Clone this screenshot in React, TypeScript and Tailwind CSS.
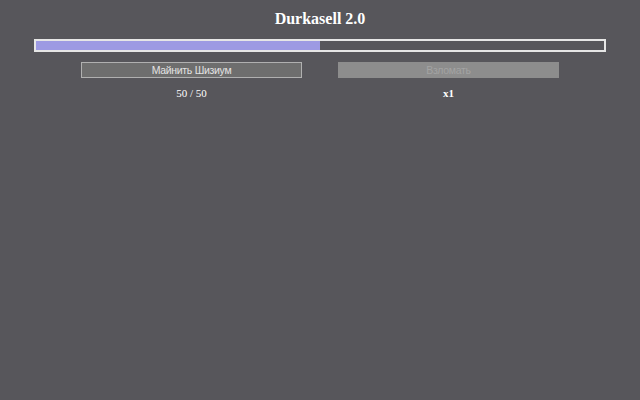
export default function App() {
  const current = 50;
  const max = 50;
  const progress = 50;

  return (
    <div className="min-h-screen bg-[#57565b] font-['Liberation_Serif',serif] text-white">
      <h1 className="pt-[9px] text-center text-[16px] font-bold leading-[20px]">Durkasell 2.0</h1>

      {/* прогресс */}
      <div className="mx-[34px] mt-[10px] h-[13px] border-2 border-[#e6e6e6]">
        <div className="h-full bg-[#9d9ae3]" style={{ width: `${progress}%` }} />
      </div>

      <div className="mx-[63px] mt-[10px] grid grid-cols-2">
        <div className="flex flex-col items-center">
          <button className="h-[16px] w-[221px] border border-[#b0b0b0] bg-[#6e6e6e] font-['Liberation_Sans',sans-serif] text-[10.5px] leading-[14px] tracking-[-0.3px] text-[#e2e2e2]">
            Майнить Шизиум
          </button>
          <p className="mt-[9px] text-[11px] leading-[13px]">
            {current} / {max}
          </p>
        </div>
        <div className="flex flex-col items-center">
          <button
            disabled
            className="h-[16px] w-[221px] bg-[#8d8d8d] font-['Liberation_Sans',sans-serif] text-[10.5px] leading-[16px] tracking-[-0.3px] text-[#a3a3a3]"
          >
            Взломать
          </button>
          <p className="mt-[9px] text-[11px] font-bold leading-[13px]">x1</p>
        </div>
      </div>
    </div>
  );
}
